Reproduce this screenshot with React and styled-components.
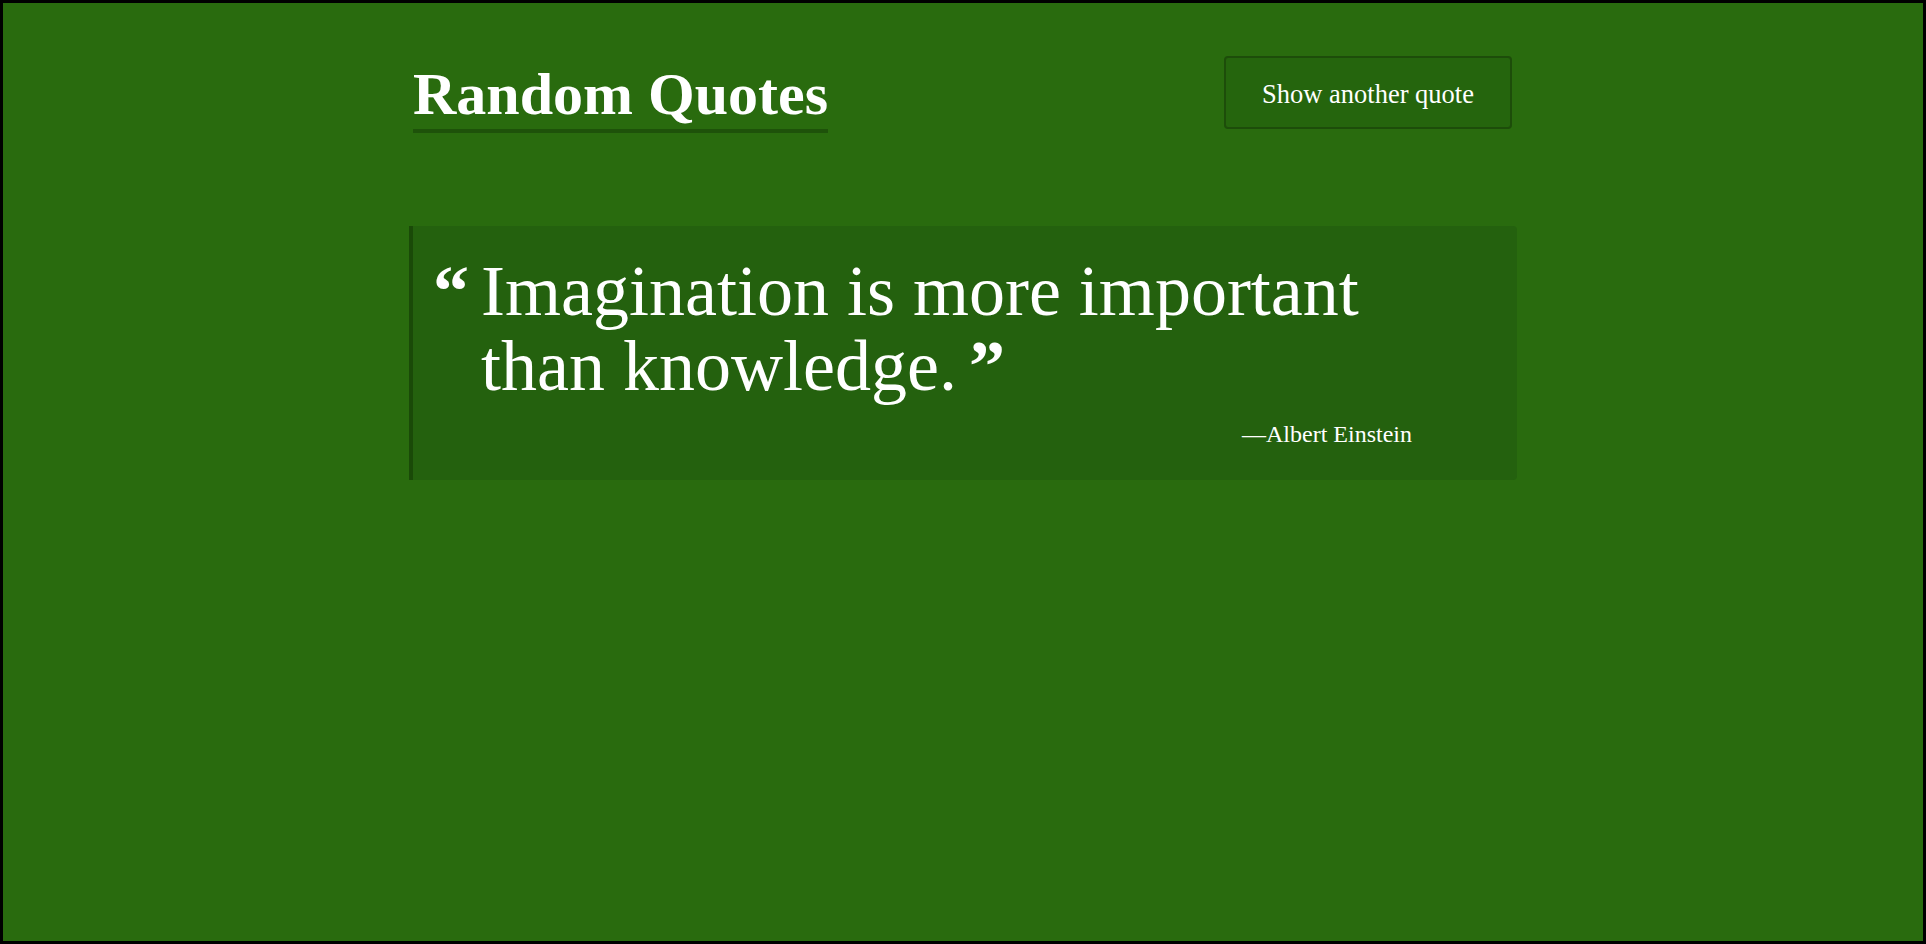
import styled, { createGlobalStyle } from "styled-components";

const GlobalStyle = createGlobalStyle`
    html, body {
        margin: 0;
        padding: 0;
        background: #000;
    }

    * {
        box-sizing: border-box;
    }
`;

const Page = styled.div`
    min-height: 100vh;
    border: 3px solid #000;
    background-color: #296b0e;
    color: #fff;
    font-family: "Liberation Serif", "Times New Roman", serif;
`;

const Container = styled.main`
    width: 1108px;
    margin: 0 auto;
`;

const Header = styled.header`
    display: flex;
    justify-content: space-between;
    align-items: flex-start;
    margin-top: 53px;
    padding: 0 5px 0 4px;
`;

const Title = styled.h1`
    margin: 3.5px 0 0;
    font-size: 60px;
    font-weight: 700;
    line-height: normal;
    border-bottom: 4px solid #1e520a;
`;

const NewQuoteButton = styled.button`
    height: 73px;
    padding: 3px 36px 0;
    background-color: #25650d;
    border: 2px solid #1d4d0a;
    border-radius: 4px;
    color: #fff;
    font-family: inherit;
    font-size: 26.5px;
    cursor: pointer;
`;

const QuoteCard = styled.blockquote`
    display: flex;
    margin: 93px 0 0;
    padding: 28px 105px 32px 20px;
    background-color: #24610e;
    border-left: 4px solid #1a4a08;
    border-radius: 0 4px 4px 0;
`;

const Mark = styled.span`
    flex: none;
    font-size: 72px;
    font-weight: 700;
    line-height: 75px;
    margin: ${(p) => (p.$close ? "0 0 0 12px" : "0 12px 0 0")};
`;

const QuoteBody = styled.div`
    flex: 1;
`;

const QuoteText = styled.p`
    margin: 0;
    font-size: 72px;
    line-height: 75px;
`;

const Author = styled.cite`
    display: block;
    margin-top: 17px;
    font-size: 24px;
    font-style: normal;
    text-align: right;
`;

const quote = {
    text: "Imagination is more important than knowledge.",
    author: "Albert Einstein",
};

function App() {
    return (
        <>
            <GlobalStyle />
            <Page>
                <Container>
                    <Header>
                        <Title>Random Quotes</Title>
                        <NewQuoteButton>Show another quote</NewQuoteButton>
                    </Header>
                    <QuoteCard>
                        <Mark>“</Mark>
                        <QuoteBody>
                            <QuoteText>
                                {quote.text}
                                <Mark $close>”</Mark>
                            </QuoteText>
                            <Author>—{quote.author}</Author>
                        </QuoteBody>
                    </QuoteCard>
                </Container>
            </Page>
        </>
    );
}

export default App;
